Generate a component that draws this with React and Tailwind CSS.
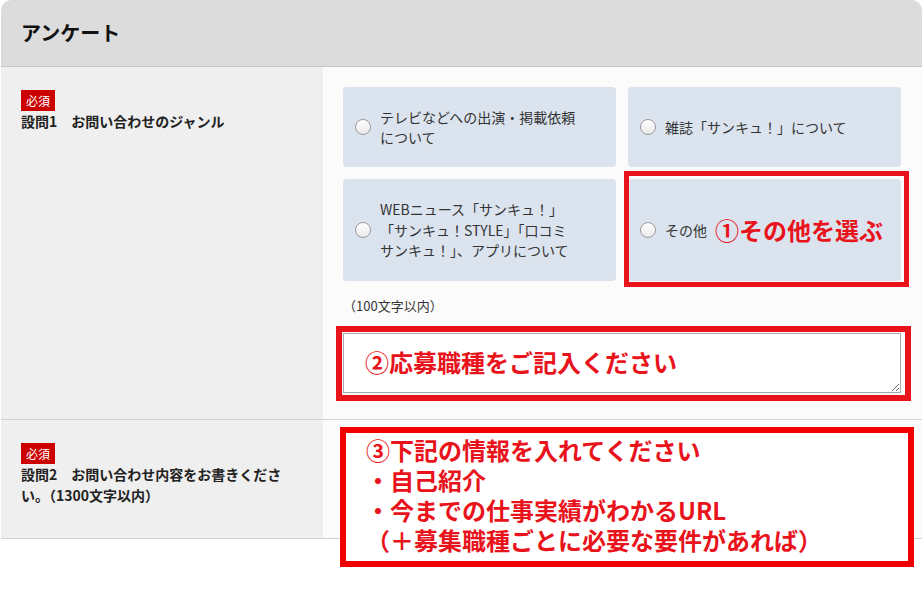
import React from 'react';

const font = { fontFamily: '"Noto Sans CJK JP", "Noto Sans", sans-serif' };

const options = [
  { id: 'tv', label: <>テレビなどへの出演・掲載依頼<br />について</> },
  { id: 'magazine', label: <>雑誌「サンキュ！」について</> },
  { id: 'web', label: <>WEBニュース「サンキュ！」<br />「サンキュ！STYLE」「口コミ<br />サンキュ！」、アプリについて</> },
];

const Radio = () => (
  <span className="shrink-0 w-4 h-4 rounded-full border border-[#9a9a9a] bg-gradient-to-b from-white to-[#e9e9e9]" />
);

const Required = () => (
  <span className="inline-block bg-[#cc0000] text-white text-[12px] leading-[21px] px-[5px]">必須</span>
);

export default function App() {
  return (
    <div className="w-[922px] min-h-[589px] bg-white pl-px" style={font}>
      <div className="h-[67px] bg-[#dcdcdc] border-b border-[#c6c6c6] rounded-t-[10px] flex items-center pl-5">
        <h2 className="text-[20px] font-bold text-[#111]">アンケート</h2>
      </div>

      {/* 設問1 */}
      <div className="grid grid-cols-[322px_1fr] border-b border-[#d2d2d2]">
        <div className="bg-[#efefef] pt-5 pl-5">
          <Required />
          <p className="text-[14px] leading-[21px] font-bold text-[#222]">設問1　お問い合わせのジャンル</p>
        </div>
        <div className="bg-[#fbfbfb] pt-5 pl-5 pr-[21px] pb-[26px]">
          <div className="grid grid-cols-2 grid-rows-[80px_102px] gap-3">
            {options.map((o) => (
              <label key={o.id} className="flex items-center gap-[9px] pl-3 bg-[#dbe3ef] rounded text-[14px] leading-[20.5px] text-[#333]">
                <Radio />
                <span>{o.label}</span>
              </label>
            ))}
            <label className="relative flex items-center gap-[9px] pl-3 bg-[#dbe3ef] rounded text-[14px] text-[#333]">
              <Radio />
              <span>その他</span>
              <span className="ml-[-1px] text-[24px] font-bold text-[#e8131b]">①その他を選ぶ</span>
              <span className="absolute -left-[4px] -top-[8px] -right-[8px] -bottom-[6px] border-[5px] border-[#e8131b] pointer-events-none" />
            </label>
          </div>
          <p className="mt-4 text-[13px] leading-[18px] text-[#333]">（100文字以内）</p>
          <div className="relative mt-[18px]">
            <textarea
              className="block w-full h-[60px] bg-white border border-[#a9a9a9] px-[21px] pt-[13px] text-[24px] leading-[30px] font-bold text-[#e8131b] outline-none"
              style={font}
              defaultValue="②応募職種をご記入ください"
            />
            <span className="absolute -left-[7px] -top-[7px] -right-[10px] -bottom-[8px] border-[6px] border-[#e8131b] pointer-events-none" />
          </div>
        </div>
      </div>

      {/* 設問2 */}
      <div className="grid grid-cols-[322px_1fr] border-b border-[#d2d2d2] min-h-[119px]">
        <div className="bg-[#efefef] pt-5 pl-5">
          <Required />
          <p className="text-[14px] leading-[21px] font-bold text-[#222]">
            設問2　お問い合わせ内容をお書きくださ<br />い。（1300文字以内）
          </p>
        </div>
        <div className="relative bg-[#fbfbfb]">
          <div className="absolute left-[17px] top-[7px] w-[574px] h-[140px] bg-white border-[6px] border-[#f00000] pl-5 pt-[2px] text-[24px] leading-[30px] font-bold text-[#e8131b]">
            <p>③下記の情報を入れてください</p>
            <p>・自己紹介</p>
            <p>・今までの仕事実績がわかるURL</p>
            <p>（＋募集職種ごとに必要な要件があれば）</p>
          </div>
        </div>
      </div>
    </div>
  );
}
